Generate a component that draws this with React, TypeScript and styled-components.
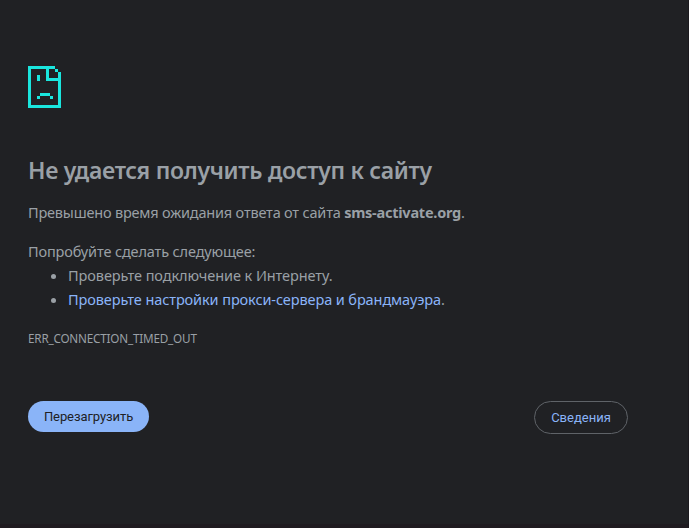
import React from "react";
import styled, { createGlobalStyle } from "styled-components";

const GlobalStyle = createGlobalStyle`
  * { box-sizing: border-box; }
  html, body { margin: 0; background: #202124; }
  body { overflow: hidden; }
`;

const Page = styled.main`
  height: 528px;
  padding: 66px 60px 0 28px;
  background: #202124;
  border-right: 1px solid #1b191e;
  border-bottom: 4px solid #1f1b20;
  color: #9aa0a6;
  font: 14.5px/24px "Noto Sans", "Open Sans", sans-serif;
`;

const SadPage = styled.svg`
  display: block;
  width: 33px;
  height: 42px;
  fill: #1ae6de;
`;

const Title = styled.h1`
  margin: 47px 0 14px;
  font-size: 23px;
  font-weight: 600;
  line-height: 31px;
  white-space: nowrap;
`;

const Line = styled.p<{ $gap?: number }>`
  margin: 0 0 ${(p) => p.$gap ?? 0}px;
  white-space: nowrap;
`;

const Fit = styled.span<{ $spacing: number }>`
  letter-spacing: ${(p) => p.$spacing}px;
`;

const Tips = styled.ul`
  margin: 0;
  padding: 0 0 0 40px;
  white-space: nowrap;
`;

const Link = styled.a`
  color: #8ab4f8;
  text-decoration: none;
`;

const ErrorCode = styled.div`
  margin-top: 15px;
  font-size: 11.7px;
`;

const Actions = styled.div`
  display: flex;
  justify-content: space-between;
  align-items: flex-start;
  margin-top: 51px;
`;

const Button = styled.button<{ $primary?: boolean }>`
  width: ${(p) => (p.$primary ? 121 : 94)}px;
  height: ${(p) => (p.$primary ? 31 : 33)}px;
  padding: 0;
  border: ${(p) => (p.$primary ? "0" : "1px solid #5f6368")};
  border-radius: 20px;
  background: ${(p) => (p.$primary ? "#8ab4f8" : "transparent")};
  color: ${(p) => (p.$primary ? "#202124" : "#8ab4f8")};
  font: 13px/15px Roboto, sans-serif;
  letter-spacing: ${(p) => (p.$primary ? -0.08 : 0)}px;
`;

export default function App() {
  return (
    <>
      <GlobalStyle />
      <Page>
        <SadPage viewBox="0 0 33 42" shapeRendering="crispEdges" aria-hidden="true">
          <path d="M0 0h27v3H21v9h9V6h3v36H0zM3 3v36h27V15H18V3zM27 3h3v3h-3zM9 9h3v6H9zM12 27h10v3H12zM9 30h3v3H9zM22 30h3v3h-3z" fillRule="evenodd" />
        </SadPage>
        <Title><Fit $spacing={-0.3}>Не удается получить доступ к сайту</Fit></Title>
        <Line $gap={15}>
          <Fit $spacing={-0.19}>Превышено время ожидания ответа от сайта </Fit>
          <Fit as="strong" $spacing={-0.24}>sms-activate.org</Fit>.
        </Line>
        <Line><Fit $spacing={-0.14}>Попробуйте сделать следующее:</Fit></Line>
        <Tips>
          <li><Fit $spacing={-0.08}>Проверьте подключение к Интернету.</Fit></li>
          <li><Fit $spacing={-0.1}><Link href="#buttons">Проверьте настройки прокси-сервера и брандмауэра</Link>.</Fit></li>
        </Tips>
        <ErrorCode><Fit $spacing={-0.19}>ERR_CONNECTION_TIMED_OUT</Fit></ErrorCode>
        <Actions id="buttons">
          <Button $primary>Перезагрузить</Button>
          <Button>Сведения</Button>
        </Actions>
      </Page>
    </>
  );
}
